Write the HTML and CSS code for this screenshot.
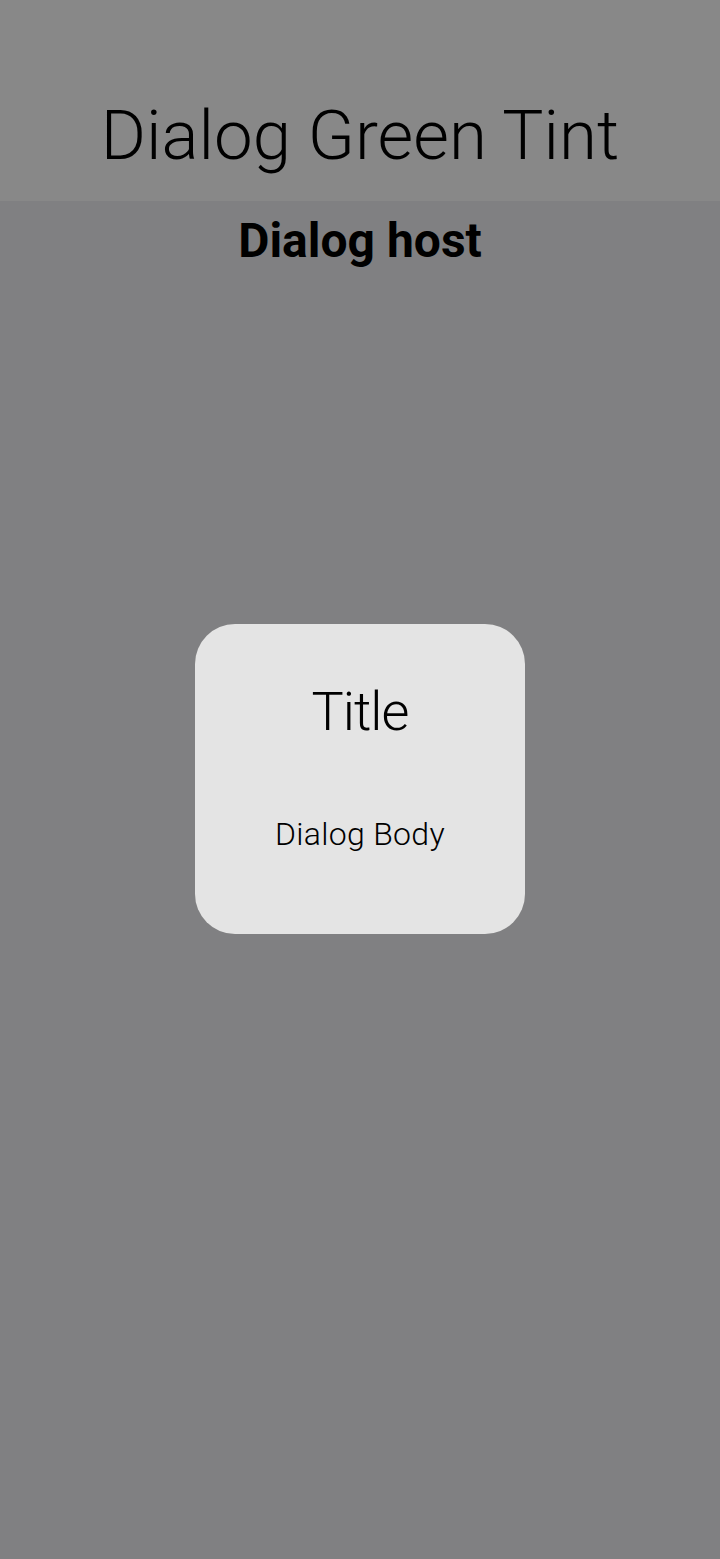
FILE: index.html
```html
<!DOCTYPE html>
<html lang="en">
<head>
    <meta charset="UTF-8">
    <meta name="viewport" content="width=device-width, initial-scale=1.0">
    <title>Dialog Green Tint</title>
    <link rel="stylesheet" href="styles.css">
</head>
<body>

    <header class="top-bar">
        <h1>Dialog Green Tint</h1>
    </header>

    <main class="host">
        <h2>Dialog host</h2>

        <div class="dialog">
            <div class="dialog-title">Title</div>
            <div class="dialog-body">Dialog Body</div>
        </div>
    </main>

</body>
</html>
```

FILE: styles.css
```css
body {
    font-family: 'Roboto', sans-serif;
    margin: 0;
    background-color: #808082;
    color: #000;
    height: 1559px;
    display: flex;
    flex-direction: column;
}

.top-bar {
    height: 201px;
    background-color: #888888;
    box-sizing: border-box;
    padding-top: 96px;
}

.top-bar h1 {
    margin: 0;
    text-align: center;
    font-size: 69px;
    font-weight: 300;
    line-height: 80px;
}

.host {
    flex: 1;
    display: flex;
    flex-direction: column;
    align-items: center;
}

.host h2 {
    margin: 12px 0 0;
    font-size: 48px;
    font-weight: 700;
    line-height: 56px;
}

.dialog {
    margin-top: 355px;
    width: 330px;
    height: 310px;
    box-sizing: border-box;
    background-color: #e4e4e4;
    border-radius: 40px;
    display: flex;
    flex-direction: column;
    align-items: center;
    padding-top: 56px;
}

.dialog-title {
    font-size: 54px;
    font-weight: 300;
    line-height: 64px;
    letter-spacing: -1px;
}

.dialog-body {
    margin-top: 72px;
    font-size: 32px;
    font-weight: 300;
    line-height: 36px;
    letter-spacing: 0.3px;
}
```
